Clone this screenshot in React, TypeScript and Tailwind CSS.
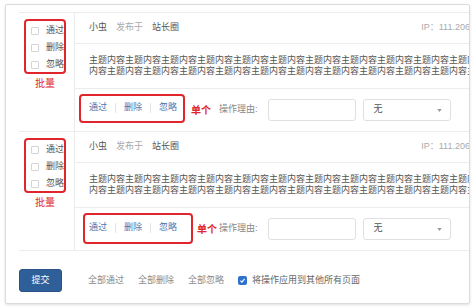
const text = '主题内容'.repeat(23)

type Item = {
  box: string
  single: string
}

// annotation boxes are hand-drawn, so they differ a little per row
const items: Item[] = [
  { box: 'ml-[4px] h-[29px] w-[106px] mb-[4px] pl-[8px]', single: 'ml-[6px]' },
  { box: 'ml-[8px] h-[31px] w-[110px] mb-[2px] pl-[4px]', single: 'ml-[4px]' },
]

function Check({ label }: { label: string }) {
  return (
    <div className="flex h-[17px] items-center gap-[7px]">
      <span className="h-[8px] w-[8px] rounded-[1px] border border-[#d4d4d4] bg-white" />
      <span className="text-[#555]">{label}</span>
    </div>
  )
}

function Row({ item }: { item: Item }) {
  return (
    <div className="flex h-[119px] border-b border-[#ececec]">
      {/* batch checkboxes */}
      <div className="w-[56px] shrink-0 border-r border-[#ececec] pl-[5px] pt-[6px]">
        <div className="h-[55px] w-[42px] rounded-[4px] border-2 border-[#e0262c] pl-[5px] pt-px">
          <Check label="通过" />
          <Check label="删除" />
          <Check label="忽略" />
        </div>
        <div className="mt-[4px] w-[42px] text-center text-[10px] leading-[12px] text-[#e0262c]">批量</div>
      </div>

      <div className="flex flex-1 flex-col">
        <div className="flex h-[31px] items-center justify-between border-b border-[#ececec] px-[14px]">
          <div className="flex items-center gap-[9px]">
            <span className="text-[#555]">小虫</span>
            <span className="text-[#aaa]">发布于</span>
            <span className="text-[#555]">站长圈</span>
          </div>
          <span className="text-[#aaa]">IP：111.206.125.142</span>
        </div>
        <div className="flex h-[45px] items-center border-b border-[#ececec] px-[14px]">
          <p className="leading-[11px] text-[#555] break-all">{text}</p>
        </div>
        <div className="flex flex-1 items-center">
          <div className="flex w-[144px] shrink-0 items-center">
            <div className={`flex items-center rounded-[4px] border-2 border-[#e0262c] ${item.box}`}>
              <a className="text-[#4a78b0]">通过</a>
              <span className="mx-[8px] h-[10px] w-px bg-[#e3e3e3]" />
              <a className="text-[#4a78b0]">删除</a>
              <span className="mx-[8px] h-[10px] w-px bg-[#e3e3e3]" />
              <a className="text-[#4a78b0]">忽略</a>
            </div>
            <span className={`text-[10px] font-bold text-[#e0262c] ${item.single}`}>单个</span>
          </div>
          <span className="text-[#888]">操作理由:</span>
          <div className="ml-[10px] h-[22px] w-[88px] rounded-[3px] border border-[#e0e0e0] bg-white" />
          <div className="ml-[7px] flex h-[22px] w-[88px] items-center justify-between rounded-[3px] border border-[#e0e0e0] bg-white pl-[10px] pr-[8px]">
            <span className="text-[#555]">无</span>
            <svg viewBox="0 0 6 4" className="h-[3px] w-[5px]">
              <path d="M0 0h6L3 4z" fill="#999" />
            </svg>
          </div>
        </div>
      </div>
    </div>
  )
}

export default function App() {
  return (
    <div className="h-[308px] w-[474px] bg-white pl-[5px] pt-[4px] font-['Liberation_Sans','Noto_Sans_CJK_SC',sans-serif] text-[9px]">
      <div className="h-[300px] w-[465px] overflow-hidden rounded-[2px] border border-[#dcdcdc] bg-white pl-[13px] pt-[7px] shadow-[0_1px_3px_rgba(0,0,0,0.12)]">
        <div className="w-[500px] border-t border-[#ececec]">
          {items.map((item, i) => (
            <Row key={i} item={item} />
          ))}
        </div>

        {/* footer */}
        <div className="flex items-center pt-[18px]">
          <button className="h-[23px] w-[43px] rounded-[3px] border border-[#2a5289] bg-[#2f5f98] text-[9px] text-white">
            提交
          </button>
          <a className="ml-[26px] text-[#8a8a8a]">全部通过</a>
          <a className="ml-[14px] text-[#8a8a8a]">全部删除</a>
          <a className="ml-[14px] text-[#8a8a8a]">全部忽略</a>
          <span className="ml-[14px] flex h-[9px] w-[9px] items-center justify-center rounded-[2px] bg-[#2f72c9]">
            <svg viewBox="0 0 10 10" className="h-[7px] w-[7px]">
              <path d="M2 5.2 4.2 7.3 8 2.8" fill="none" stroke="#fff" strokeWidth="1.6" />
            </svg>
          </span>
          <span className="ml-[5px] text-[#666]">将操作应用到其他所有页面</span>
        </div>
      </div>
    </div>
  )
}
